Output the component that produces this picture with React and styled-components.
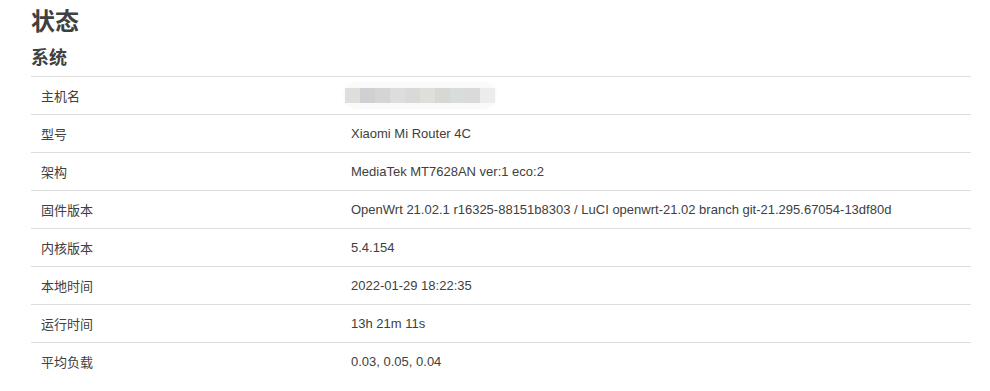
import React from "react";
import styled, { createGlobalStyle } from "styled-components";

const Global = createGlobalStyle`
  html, body { margin: 0; padding: 0; background: #fff; }
  body {
    font-family: "Liberation Sans", Arial, "Noto Sans CJK SC", sans-serif;
    color: #404040;
  }
`;

const Page = styled.main`
  padding: 4px 19px 0 31px;
`;

const Title = styled.h2`
  margin: 0;
  font-size: 24px;
  line-height: 36px;
  font-weight: bold;
  color: #404040;
`;

const Section = styled.section`
  margin-top: 2px;
`;

const SectionTitle = styled.h3`
  margin: 0 0 2px;
  font-size: 18px;
  line-height: 32px;
  font-weight: bold;
  color: #404040;
`;

const Table = styled.div`
  width: 940px;
  border-top: 1px solid #ddd;
  font-size: 13px;
`;

const Row = styled.div`
  display: grid;
  grid-template-columns: 320px 1fr;
  height: 37px;
  align-items: center;
  border-bottom: ${(p) => (p.$last ? "none" : "1px solid #ddd")};
`;

const Label = styled.div`
  padding-left: 10px;
`;

const Value = styled.div``;

const Blur = styled.div`
  display: inline-flex;
  align-items: center;
  margin-left: -8px;
  padding: 6px 2px;
  border-radius: 14px;
  background: #fafafa;
  vertical-align: middle;
`;

const Pix = styled.span`
  display: block;
  width: 15px;
  height: 15px;
  background: ${(p) => p.$c};
`;

const pixels = [
  "#e0dedb",
  "#d0d0d2",
  "#d8d4d4",
  "#dcdddc",
  "#d8dad9",
  "#e0dedb",
  "#d8d7d5",
  "#d9dcdd",
  "#dcdad9",
  "#ececec",
];

const rows = [
  ["主机名", null],
  ["型号", "Xiaomi Mi Router 4C"],
  ["架构", "MediaTek MT7628AN ver:1 eco:2"],
  [
    "固件版本",
    "OpenWrt 21.02.1 r16325-88151b8303 / LuCI openwrt-21.02 branch git-21.295.67054-13df80d",
  ],
  ["内核版本", "5.4.154"],
  ["本地时间", "2022-01-29 18:22:35"],
  ["运行时间", "13h 21m 11s"],
  ["平均负载", "0.03, 0.05, 0.04"],
];

export default function App() {
  return (
    <>
      <Global />
      <Page>
        <Title>状态</Title>
        <Section>
          <SectionTitle>系统</SectionTitle>
          <Table>
            {rows.map(([k, v], i) => (
              <Row key={k} $last={i === rows.length - 1}>
                <Label>{k}</Label>
                <Value>
                  {v === null ? (
                    <Blur>
                      {pixels.map((c, j) => (
                        <Pix key={j} $c={c} />
                      ))}
                    </Blur>
                  ) : (
                    v
                  )}
                </Value>
              </Row>
            ))}
          </Table>
        </Section>
      </Page>
    </>
  );
}
